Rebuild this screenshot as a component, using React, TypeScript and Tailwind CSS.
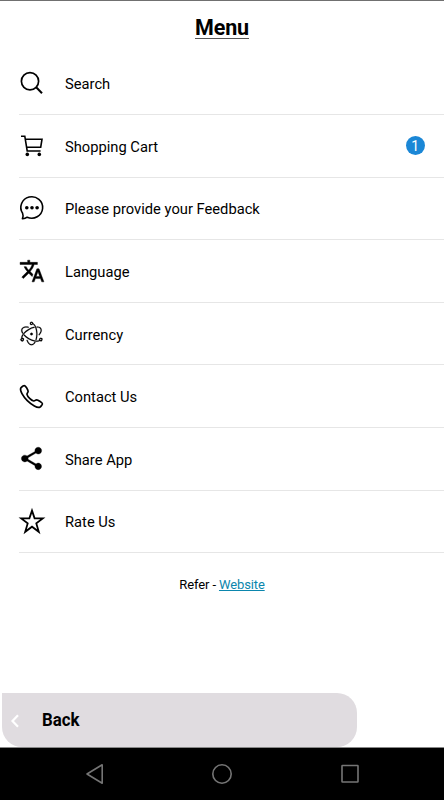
import type { ReactNode } from "react";
import { MdShare, MdTranslate } from "react-icons/md";
import { IoCallOutline, IoLogoElectron } from "react-icons/io5";

const box = "h-7 w-7 fill-none stroke-black";

const SearchIcon = () => (
  <svg viewBox="0 0 28 28" className={box} strokeWidth="1.7">
    <circle cx="12" cy="12.2" r="8.6" />
    <path d="M18.2 18.2 24 24.2" strokeWidth="2" />
  </svg>
);

const CartIcon = () => (
  <svg viewBox="0 0 28 28" className={box} strokeWidth="1.6">
    <path d="M3 4.2H6.8L9.2 19H22.6M7.4 7.2H24L22.7 15.3H8.8" />
    <circle cx="9.3" cy="22.4" r="1.8" className="fill-black stroke-none" />
    <circle cx="21.3" cy="22.4" r="1.8" className="fill-black stroke-none" />
  </svg>
);

const ChatIcon = () => (
  <svg viewBox="0 0 28 28" className={box} strokeWidth="1.6" strokeLinejoin="round">
    <path d="M4.6 19.3A10.9 10.7 0 1 1 9.2 23.2C7.8 24.3 6.3 24.9 4.4 24.8C5.1 23 5.4 21.1 4.6 19.3Z" />
    <g className="fill-black stroke-none">
      <circle cx="8.8" cy="13.8" r="1.8" />
      <circle cx="14" cy="13.8" r="1.8" />
      <circle cx="19.1" cy="13.8" r="1.8" />
    </g>
  </svg>
);

const StarIcon = () => (
  <svg viewBox="0 0 28 28" className={box} strokeWidth="1.8">
    <path d="M14 3.6 16.6 11.4H24.8L18.3 16.4 20.8 24.8 14 19.7 7.2 24.8 9.7 16.4 3.2 11.4H11.4Z" />
  </svg>
);

const items: { label: string; icon: ReactNode; count?: number }[] = [
  { label: "Search", icon: <SearchIcon /> },
  { label: "Shopping Cart", icon: <CartIcon />, count: 1 },
  { label: "Please provide your Feedback", icon: <ChatIcon /> },
  {
    label: "Language",
    icon: <MdTranslate size={26} className="stroke-black stroke-[0.4] [&>path:first-child]:stroke-none" />,
  },
  { label: "Currency", icon: <IoLogoElectron size={27} className="stroke-black stroke-[4]" /> },
  { label: "Contact Us", icon: <IoCallOutline size={27} /> },
  { label: "Share App", icon: <MdShare size={27} className="stroke-black stroke-[0.3] [&>path:first-child]:stroke-none" /> },
  { label: "Rate Us", icon: <StarIcon /> },
];

export default function App() {
  return (
    <div className="flex h-[800px] w-[444px] flex-col overflow-hidden border-t border-[#707070] bg-white font-['Roboto',sans-serif] text-black">
      <header className="flex h-[51.3px] shrink-0 justify-center pt-[13px]">
        <h1 className="h-[24.5px] border-b border-[#555] text-[21.5px] leading-[27px] font-bold tracking-[-0.15px]">Menu</h1>
      </header>
      <ul className="shrink-0 pl-[18.5px]">
        {items.map((item) => (
          <li key={item.label} className="flex h-[62.63px] items-center border-b border-[#e6e6e6]">
            <span className="-ml-[0.7px] flex w-7 shrink-0 justify-center">{item.icon}</span>
            <span className="ml-[19.2px] flex-1 origin-left scale-x-[0.949] pt-0.5 text-[15.5px] leading-5">{item.label}</span>
            {item.count && (
              <span className="mr-[19.5px] flex size-[18.5px] items-center justify-center rounded-full bg-[#1b87d6] text-[14px] leading-none text-white">
                {item.count}
              </span>
            )}
          </li>
        ))}
      </ul>
      <p className="mt-[21.5px] text-center text-[13px] leading-5 tracking-[-0.12px]">
        Refer - <a className="text-[#0b86ad] underline">Website</a>
      </p>
      <button className="mt-auto ml-0.5 flex h-[54px] w-[355px] shrink-0 items-center rounded-r-[20px] rounded-bl-[20px] bg-[#e0dce0] pl-2 text-left">
        <svg viewBox="0 0 10 14" className="mt-0.5 h-3.5 w-2.5 fill-none stroke-white" strokeWidth="2.2">
          <path d="M8 1.2 2.5 7 8 12.8" />
        </svg>
        <span className="ml-[22px] origin-left scale-x-[0.935] pb-0.5 text-[18px] font-bold">Back</span>
      </button>
      <nav className="flex h-[53px] shrink-0 border-t border-[#888] bg-black">
        <svg viewBox="0 0 444 52" className="h-[52px] w-full fill-none stroke-[#757575]" strokeWidth="1.6">
          <path d="M102.2 16.8V35.2L87 26Z" strokeLinejoin="round" />
          <circle cx="222" cy="26" r="9.2" />
          <rect x="342" y="17.5" width="16" height="16.5" rx="0.5" />
        </svg>
      </nav>
    </div>
  );
}
